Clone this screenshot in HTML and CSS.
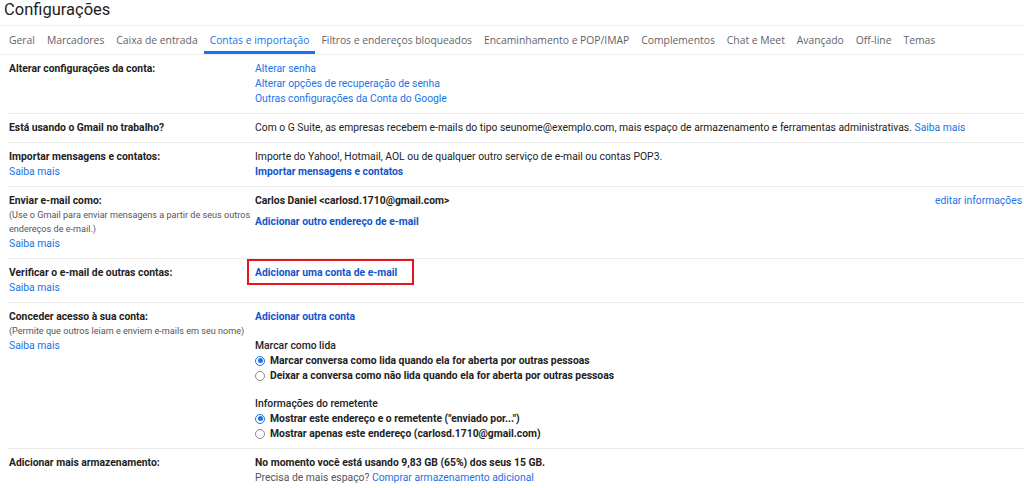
FILE: index.html
```html
<!DOCTYPE html>
<html lang="pt-BR">
<head>
<meta charset="utf-8">
<title>Configurações</title>
<link rel="stylesheet" href="styles.css">
</head>
<body>
<div class="page">
  <h1 class="title">Configurações</h1>
  <nav class="tabs">
    <span class="tab">Geral</span>
    <span class="tab">Marcadores</span>
    <span class="tab">Caixa de entrada</span>
    <span class="tab active">Contas e importação</span>
    <span class="tab">Filtros e endereços bloqueados</span>
    <span class="tab">Encaminhamento e POP/IMAP</span>
    <span class="tab">Complementos</span>
    <span class="tab">Chat e Meet</span>
    <span class="tab">Avançado</span>
    <span class="tab">Off-line</span>
    <span class="tab">Temas</span>
  </nav>
  <div class="rows">
    <div class="row">
      <div class="label"><b>Alterar configurações da conta:</b></div>
      <div class="value">
        <a class="link">Alterar senha</a>
        <a class="link">Alterar opções de recuperação de senha</a>
        <a class="link">Outras configurações da Conta do Google</a>
      </div>
    </div>
    <div class="row">
      <div class="label"><b>Está usando o Gmail no trabalho?</b></div>
      <div class="value">
        <p>Com o G Suite, as empresas recebem e-mails do tipo seunome@exemplo.com, mais espaço de armazenamento e ferramentas administrativas. <a class="inline-link">Saiba mais</a></p>
      </div>
    </div>
    <div class="row">
      <div class="label"><b>Importar mensagens e contatos:</b><a class="link">Saiba mais</a></div>
      <div class="value">
        <p>Importe do Yahoo!, Hotmail, AOL ou de qualquer outro serviço de e-mail ou contas POP3.</p>
        <a class="link strong">Importar mensagens e contatos</a>
      </div>
    </div>
    <div class="row">
      <div class="label">
        <b>Enviar e-mail como:</b>
        <span class="note">(Use o Gmail para enviar mensagens a partir de seus outros endereços de e-mail.)</span>
        <a class="link">Saiba mais</a>
      </div>
      <div class="value">
        <div class="identity">
          <b>Carlos Daniel &lt;carlosd.1710@gmail.com&gt;</b>
          <a class="inline-link">editar informações</a>
        </div>
        <a class="link strong spaced">Adicionar outro endereço de e-mail</a>
      </div>
    </div>
    <div class="row">
      <div class="label"><b>Verificar o e-mail de outras contas:</b><a class="link">Saiba mais</a></div>
      <div class="value">
        <a class="link strong highlight">Adicionar uma conta de e-mail</a>
      </div>
    </div>
    <div class="row">
      <div class="label">
        <b>Conceder acesso à sua conta:</b>
        <span class="note">(Permite que outros leiam e enviem e-mails em seu nome)</span>
        <a class="link">Saiba mais</a>
      </div>
      <div class="value">
        <a class="link strong">Adicionar outra conta</a>
        <div class="group">
          <div class="group-title">Marcar como lida</div>
          <label class="radio"><span class="dot checked"></span>Marcar conversa como lida quando ela for aberta por outras pessoas</label>
          <label class="radio"><span class="dot"></span>Deixar a conversa como não lida quando ela for aberta por outras pessoas</label>
        </div>
        <div class="group second">
          <div class="group-title">Informações do remetente</div>
          <label class="radio"><span class="dot checked"></span>Mostrar este endereço e o remetente ("enviado por...")</label>
          <label class="radio"><span class="dot"></span>Mostrar apenas este endereço (carlosd.1710@gmail.com)</label>
        </div>
      </div>
    </div>
    <div class="row last">
      <div class="label"><b>Adicionar mais armazenamento:</b></div>
      <div class="value">
        <b>No momento você está usando 9,83 GB (65%) dos seus 15 GB.</b>
        <p class="muted">Precisa de mais espaço? <a class="inline-link">Comprar armazenamento adicional</a></p>
      </div>
    </div>
  </div>
</div>
</body>
</html>
```
FILE: styles.css
```css
* { box-sizing: border-box; }
html, body { margin: 0; padding: 0; background: #fff; }
body {
  font-family: Roboto, "Liberation Sans", Arial, sans-serif;
  font-size: 10.35px;
  line-height: 15px;
  color: #222;
  width: 1024px;
  height: 488px;
  overflow: hidden;
}
p { margin: 0; }
b { font-weight: 700; color: #222; }

.title {
  margin: 0;
  height: 26px;
  padding-left: 4px;
  font-family: Roboto, "Open Sans", sans-serif;
  font-weight: 400;
  font-size: 16.5px;
  line-height: 20px;
  color: #222;
  border-bottom: 1px solid #f1f1f1;
}

.tabs {
  display: flex;
  height: 29px;
  padding-left: 3px;
  border-bottom: 1px solid #efefef;
  font-family: "Open Sans", Roboto, sans-serif;
  font-size: 10.33px;
  color: #5f6368;
}
.tab {
  display: flex;
  align-items: center;
  padding: 3px 6px 0;
  white-space: nowrap;
  border-bottom: 3px solid transparent;
}
.tab.active {
  color: #1a73e8;
  border-bottom-color: #1a73e8;
}

.rows { margin-left: 8px; }
.row {
  display: grid;
  grid-template-columns: 247px 1fr;
  padding: 6px 0 7px;
  border-bottom: 1px solid #ebebeb;
}
.row.last { border-bottom: none; }
.label { display: flex; flex-direction: column; align-items: flex-start; padding-left: 1px; }
.value { display: flex; flex-direction: column; align-items: flex-start; padding-right: 2px; }

.link { color: #1a73e8; cursor: pointer; }
.link.strong { color: #1155cc; font-weight: 700; }
.inline-link { color: #1a73e8; cursor: pointer; }

.note {
  font-size: 9.1px;
  line-height: 14px;
  color: #555;
}

.identity {
  display: flex;
  justify-content: space-between;
  align-self: stretch;
}
.spaced { margin-top: 6px; }

.highlight { position: relative; }
.highlight::after {
  content: "";
  position: absolute;
  left: -8px;
  right: -17px;
  top: -6px;
  bottom: -5px;
  border: 2px solid #e8141a;
}

.group { margin-top: 14px; display: flex; flex-direction: column; }
.group.second { margin-top: 13px; }
.group-title { color: #222; font-weight: 500; }
.radio {
  display: flex;
  align-items: center;
  font-weight: 700;
  color: #222;
}
.dot {
  width: 10px;
  height: 10px;
  border-radius: 50%;
  border: 1px solid #8a8a8a;
  margin-right: 5px;
  flex: none;
  position: relative;
}
.dot.checked { border-color: #1a73e8; }
.dot.checked::after {
  content: "";
  position: absolute;
  left: 1.5px; top: 1.5px;
  width: 5px; height: 5px;
  border-radius: 50%;
  background: #1a73e8;
}
.muted { color: #555; }
```
